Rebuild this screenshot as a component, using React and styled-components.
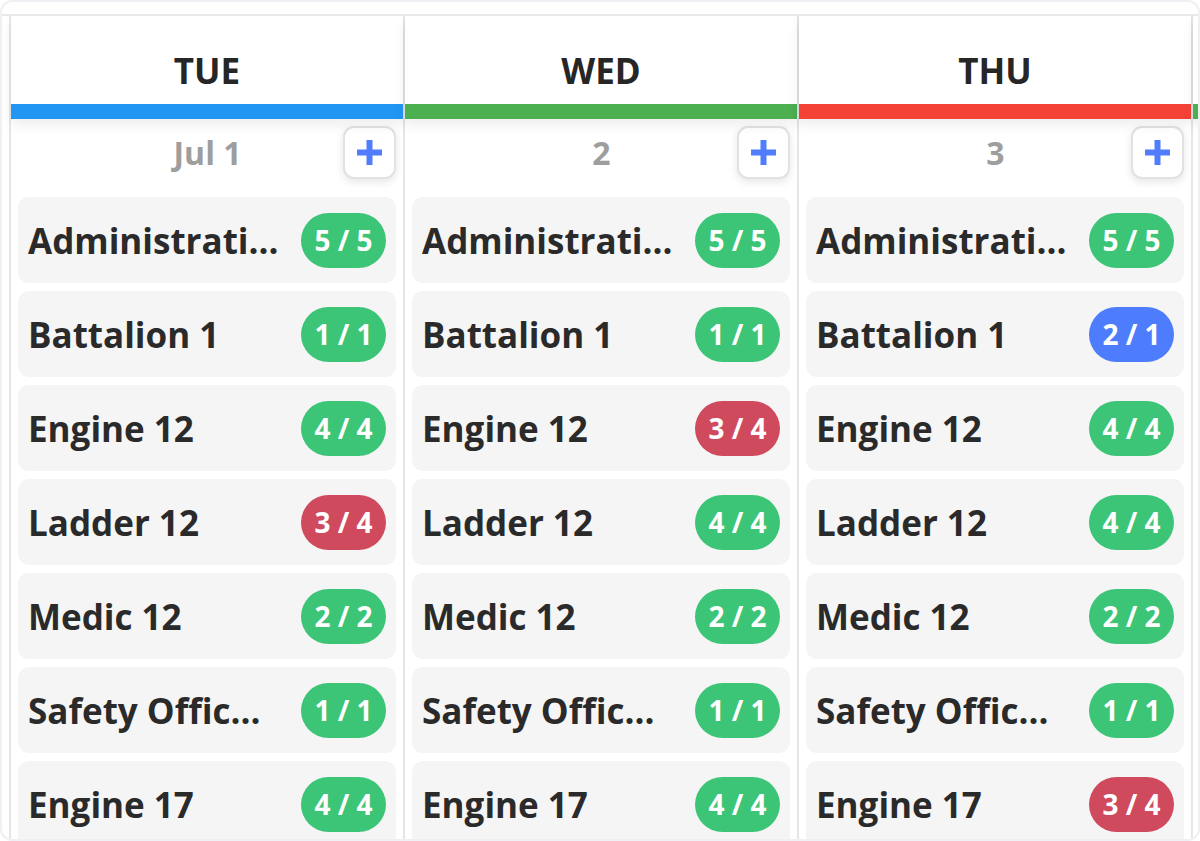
import React from "react"
import styled, { createGlobalStyle } from "styled-components"

const GlobalStyle = createGlobalStyle`
  html, body {
    margin: 0;
    padding: 0;
    background: #ffffff;
  }
  body {
    font-family: "Open Sans", "Noto Sans", sans-serif;
  }
`

const days = [
  {
    name: "TUE",
    date: "Jul 1",
    color: "#2196f3",
    units: [
      ["Administration", 5, 5],
      ["Battalion 1", 1, 1],
      ["Engine 12", 4, 4],
      ["Ladder 12", 3, 4],
      ["Medic 12", 2, 2],
      ["Safety Officer", 1, 1],
      ["Engine 17", 4, 4],
    ],
  },
  {
    name: "WED",
    date: "2",
    color: "#4caf50",
    units: [
      ["Administration", 5, 5],
      ["Battalion 1", 1, 1],
      ["Engine 12", 3, 4],
      ["Ladder 12", 4, 4],
      ["Medic 12", 2, 2],
      ["Safety Officer", 1, 1],
      ["Engine 17", 4, 4],
    ],
  },
  {
    name: "THU",
    date: "3",
    color: "#f44336",
    units: [
      ["Administration", 5, 5],
      ["Battalion 1", 2, 1],
      ["Engine 12", 4, 4],
      ["Ladder 12", 4, 4],
      ["Medic 12", 2, 2],
      ["Safety Officer", 1, 1],
      ["Engine 17", 3, 4],
    ],
  },
]

// the next day only peeks in at the right edge
const nextDayColor = "#4caf50"

const MAX_NAME = 12
const shorten = (s) => (s.length > MAX_NAME ? s.slice(0, MAX_NAME) + "..." : s)

const statusOf = (have, need) => {
  if (have < need) return "short"
  if (have > need) return "over"
  return "full"
}

const PlusIcon = () => (
  <svg width="27" height="27" viewBox="0 0 27 27">
    <path d="M13.5 1v25M1 13.5h25" stroke="#4f7dfd" strokeWidth="6" />
  </svg>
)

const App = () => {
  return (
    <>
      <GlobalStyle />
      <Frame>
        <Board>
          {days.map((day) => (
            <Column key={day.name}>
              <Header>
                <DayName>{day.name}</DayName>
                <ColorBar $color={day.color} />
              </Header>
              <DateRow>
                <DateLabel>{day.date}</DateLabel>
                <AddButton aria-label="add">
                  <PlusIcon />
                </AddButton>
              </DateRow>
              <UnitList>
                {day.units.map(([unit, have, need]) => (
                  <UnitCard key={unit}>
                    <UnitName title={unit}>{shorten(unit)}</UnitName>
                    <Badge $status={statusOf(have, need)}>
                      {have} / {need}
                    </Badge>
                  </UnitCard>
                ))}
              </UnitList>
            </Column>
          ))}
          <Column>
            <Header>
              <DayName />
              <ColorBar $color={nextDayColor} />
            </Header>
          </Column>
        </Board>
      </Frame>
    </>
  )
}

const Frame = styled.div`
  box-sizing: border-box;
  width: 1200px;
  height: 841px;
  border: 2px solid #eff0f4;
  border-radius: 12px;
  padding-top: 12px;
  overflow: hidden;
  background: #fff;
`

const Board = styled.div`
  display: flex;
  height: 100%;
  padding-left: 7px;
  border-top: 2px solid #e8e8e8;
  overflow: hidden;
`

const Column = styled.section`
  flex: 0 0 394px;
  width: 394px;
  min-width: 0;
  box-sizing: border-box;
  border-left: 2px solid #e6e6e6;
  display: flex;
  flex-direction: column;
`

const Header = styled.header`
  position: relative;
  z-index: 1;
  background: #fff;
  box-shadow: 0 6px 12px rgba(0, 0, 0, 0.07);
`

const DayName = styled.div`
  height: 88px;
  box-sizing: border-box;
  padding-top: 20px;
  display: flex;
  align-items: center;
  justify-content: center;
  font-size: 35px;
  font-weight: 700;
  color: #262626;
`

const ColorBar = styled.div`
  height: 15px;
  background: ${(p) => p.$color};
`

const DateRow = styled.div`
  display: grid;
  grid-template-columns: 53px 1fr 53px;
  align-items: center;
  height: 53px;
  margin: 7px 0 18px;
  padding: 0 7px 0 8px;
`

const DateLabel = styled.div`
  grid-column: 2;
  text-align: center;
  font-size: 32px;
  font-weight: 700;
  color: #9e9e9e;
`

const AddButton = styled.button`
  grid-column: 3;
  box-sizing: border-box;
  width: 53px;
  height: 53px;
  padding: 0;
  display: flex;
  align-items: center;
  justify-content: center;
  background: #fff;
  border: 2px solid #e2e2e2;
  border-radius: 11px;
  box-shadow: 0 3px 8px rgba(0, 0, 0, 0.1);
`

const UnitList = styled.div`
  display: flex;
  flex-direction: column;
  gap: 8px;
  padding: 0 7px;
`

const UnitCard = styled.div`
  height: 86px;
  min-width: 0;
  box-sizing: border-box;
  display: flex;
  align-items: center;
  gap: 12px;
  padding: 0 10px 0 10px;
  background: #f5f5f5;
  border-radius: 11px;
`

const UnitName = styled.div`
  flex: 1;
  min-width: 0;
  overflow: hidden;
  white-space: nowrap;
  font-size: 35px;
  font-weight: 700;
  color: #2a2a2a;
`

const badgeColors = {
  full: "#3cc477",
  short: "#d04a5e",
  over: "#4d7dfc",
}

const Badge = styled.div`
  flex: 0 0 85px;
  height: 55px;
  display: flex;
  align-items: center;
  justify-content: center;
  border-radius: 28px;
  background: ${(p) => badgeColors[p.$status]};
  color: #fff;
  font-size: 28px;
  font-weight: 700;
  white-space: nowrap;
`

export default App
